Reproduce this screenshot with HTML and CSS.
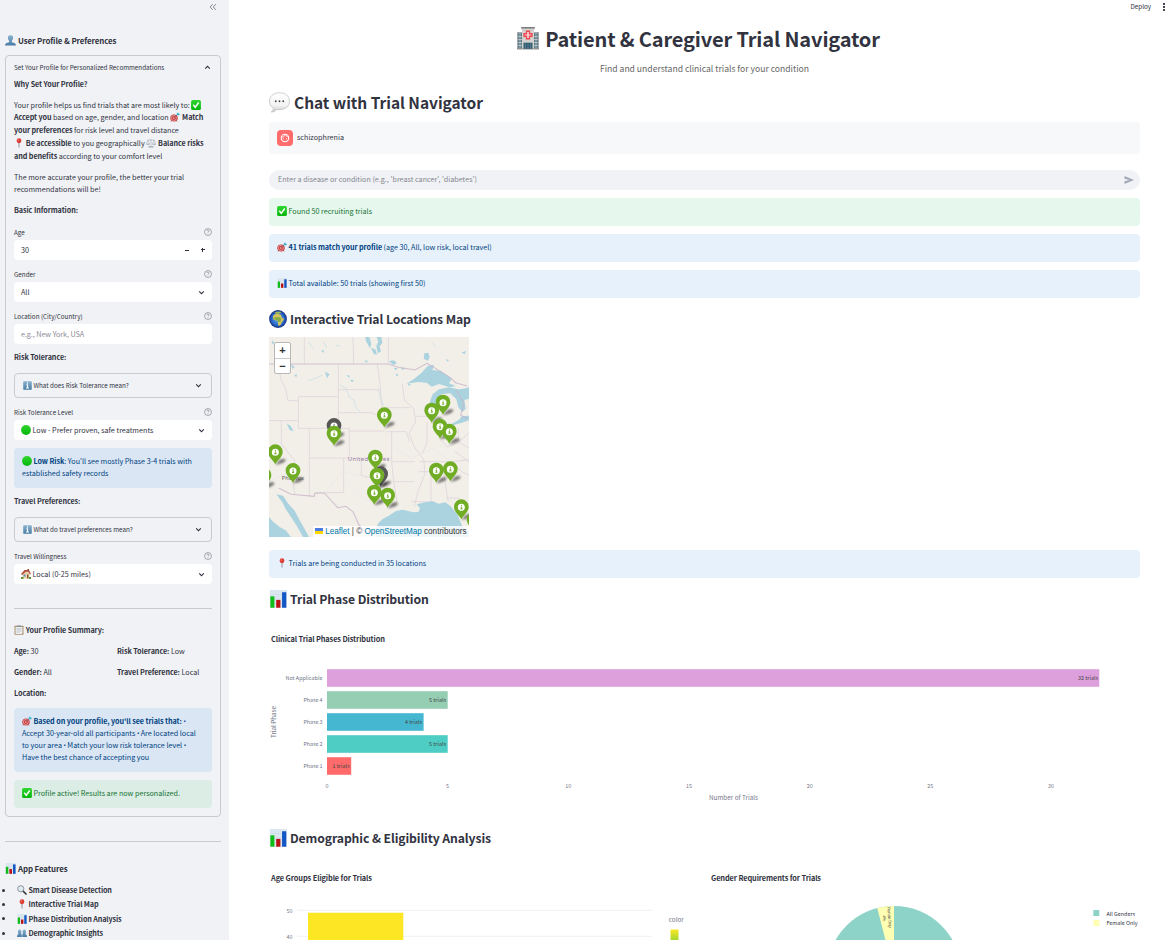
FILE: index.html
```html
<!DOCTYPE html>
<html lang="en">
<head>
<meta charset="utf-8">
<title>Patient &amp; Caregiver Trial Navigator</title>
<link rel="stylesheet" href="styles.css">
</head>
<body>
<svg class="sprite" aria-hidden="true">
  <defs>
    <linearGradient id="gGreen" x1="0" y1="0" x2="0" y2="1"><stop offset="0" stop-color="#2fd62f"/><stop offset="1" stop-color="#05b60c"/></linearGradient>
    <linearGradient id="gBlue" x1="0" y1="0" x2="0" y2="1"><stop offset="0" stop-color="#8db4d0"/><stop offset="1" stop-color="#467ba5"/></linearGradient>
    <linearGradient id="gBubble" x1="0" y1="0" x2="0" y2="1"><stop offset="0" stop-color="#fff"/><stop offset=".65" stop-color="#f4f4f4"/><stop offset="1" stop-color="#c9c9c9"/></linearGradient>
    <radialGradient id="gSea"><stop offset="0" stop-color="#5cb5ee"/><stop offset=".7" stop-color="#2b68c8"/><stop offset="1" stop-color="#142c7c"/></radialGradient>
  </defs>
  <symbol id="e-person" viewBox="0 0 20 20"><path d="M0 19c0-4 3-5 7-6 1-.4 1-2 0-3C5.600 8 5 6 5.200 4 5.500 1.500 7.500.5 10 .5s4.500 1 4.800 3.500c.2 2-.4 4-1.800 6-1 1-1 2.600 0 3 4 1 7 2 7 6z" fill="url(#gBlue)"/></symbol>
  <symbol id="e-people" viewBox="0 0 20 20"><path d="M0 18c0-4 1-5 3-6-1.500-2-2-8 2-9 4 0 4.500 5 3 9l2 1 2-1c-1.500-4-1-9 3-9 4 1 3.500 7 2 9 2 1 3 2 3 6z" fill="url(#gBlue)"/><path d="M10 13v5" stroke="#dce7ef"/></symbol>
  <symbol id="e-check" viewBox="0 0 20 20"><rect x=".2" y=".2" width="19.600" height="19.600" rx="3" fill="url(#gGreen)"/><path d="M4.500 9.500l4 5L15.500 5" fill="none" stroke="#fff" stroke-width="2.800"/></symbol>
  <symbol id="e-target" viewBox="0 0 20 20"><ellipse cx="8" cy="12" rx="7.500" ry="7.200" fill="#c93a3c"/><circle cx="7.700" cy="12" r="5.500" fill="#e9aaa6"/><circle cx="7.700" cy="12" r="4.200" fill="#c8393d"/><circle cx="7.700" cy="12" r="1.500" fill="#f6e2df"/><path d="M3 17l-1 2M13 17l1 2" stroke="#915045" stroke-width="1.500"/><path d="M8 11l7-6" stroke="#654d4d" stroke-width="1.200"/><path d="M13 6l1-4 3-1 0 2 3 1-2 3z" fill="#43b5cb"/></symbol>
  <symbol id="e-pin" viewBox="0 0 20 20"><path d="M10 9v10" stroke="#858991" stroke-width="1.800"/><circle cx="10" cy="5.500" r="4.800" fill="#dc3c34"/><circle cx="8.500" cy="4" r="1.400" fill="#f28a7e"/></symbol>
  <symbol id="e-scales" viewBox="0 0 20 20"><g fill="none" stroke="#a0aab3" stroke-width="1.100"><path d="M10 2v14M3 4h14M3.500 4L1 12h6L4 4M16.500 4L13 12h6L16 4M5 18h10"/></g><path d="M0 12h8l-2 2H2zM12 12h8l-2 2h-4zM5 16h10v3H5z" fill="#b0bac2"/></symbol>
  <symbol id="e-info" viewBox="0 0 20 20"><rect x=".5" y=".5" width="19" height="19" rx="2" fill="url(#gBlue)"/><path d="M10 3v3M7.500 8.500H10V15M6.500 15.500h7" stroke="#fff" stroke-width="2.400" fill="none"/></symbol>
  <symbol id="e-green" viewBox="0 0 20 20"><circle cx="10" cy="10" r="9.900" fill="url(#gGreen)"/></symbol>
  <symbol id="e-house" viewBox="0 0 20 20"><path d="M3 9l7-6 7 6v10H3z" fill="#e8d3ad"/><path d="M0 10L7 2l9 0 4 8-2 1-4-6-5 1-7 6z" fill="#b8503d"/><path d="M13 0h3v5h-3z" fill="#8f4738"/><path d="M5 11h4v4H5z" fill="#5f91b2"/><path d="M12 11h3v8h-3z" fill="#8a5633"/><path d="M0 16h5v4H0zM16 16h4v4h-4z" fill="#5c9a3d"/></symbol>
  <symbol id="e-clip" viewBox="0 0 20 20"><rect x="1" y="1.500" width="18" height="18" rx="1" fill="#a9906c"/><path d="M3 4h14v12l-2 2H3z" fill="#edf0f2"/><path d="M6 1h8v3H6z" fill="#8b9298"/><path d="M5 7h10M5 9.500h10M5 12h10M5 14.500h7" stroke="#a5adb5" stroke-width=".9"/></symbol>
  <symbol id="e-chart" viewBox="0 0 20 20"><path d="M1 0h19v20H1z" fill="#dce6ee"/><path d="M1 5h19M1 10h19M1 15h19" stroke="#c8d5df" stroke-width=".5"/><path d="M1.500 7H6v12.700H1.500z" fill="#10bd18"/><path d="M8 11h4.700v8.700H8z" fill="#be1219"/><path d="M14.500 2.500h4.700v17.200h-4.700z" fill="#1257c5"/></symbol>
  <symbol id="e-search" viewBox="0 0 20 20"><path d="M11 11l7 7" stroke="#33363a" stroke-width="3.400" stroke-linecap="round"/><circle cx="7.500" cy="7.500" r="6.200" fill="#dcebf2" stroke="#787f85" stroke-width="1.600"/></symbol>
  <symbol id="e-hospital" viewBox="0 0 44 46"><path d="M9 1h26v5H9z" fill="#77797c"/><path d="M0 11h12v34H0zM32 11h12v34H32z" fill="#a5a7a8"/><path d="M2 14h8v29H2zM34 14h8v29h-8z" fill="#587b89"/><path d="M6 14v29M38 14v29M2 20h8M2 26h8M2 32h8M2 38h8M34 20h8M34 26h8M34 32h8M34 38h8" stroke="#c5cbcd" stroke-width="1.500"/><path d="M10 4h24v41H10z" fill="#d4d2ce"/><path d="M9 2h26" stroke="#77797c" stroke-width="2"/><path d="M19 9.500h6v5h5v5h-5v5h-6v-5h-5v-5h5z" fill="#fbd9da" stroke="#ef4450" stroke-width="2.600"/><path d="M13 33h18v12H13z" fill="#315b71"/><path d="M13 32h18M22 34v11M17 34v11M27 34v11" stroke="#7597a7" stroke-width="1.200"/><path d="M0 45h44" stroke="#747679" stroke-width="1.500"/></symbol>
  <symbol id="e-bubble" viewBox="0 0 42 42"><path d="M21 1.500C9 1.500 1 8.500 1 18.500c0 6 3 11 8 14-.5 3-2 5.500-4.500 7.500 5 .3 8.500-2 11-5 13 2 25.500-4 25.500-16.500 0-10-8-17-20-17z" fill="url(#gBubble)" stroke="#bfbfbf" stroke-width="1.500"/><g fill="#4a4a4a"><circle cx="13.500" cy="18.500" r="1.900"/><circle cx="21" cy="18.500" r="1.900"/><circle cx="28.500" cy="18.500" r="1.900"/></g></symbol>
  <symbol id="e-globe" viewBox="0 0 36 36"><circle cx="18" cy="18" r="17.800" fill="url(#gSea)"/><path d="M8 12c2-3 4-4 8-4 3 0 6 0 8 2l2 6 4 1c0 4-4 6-5 9-1 4-4 7-6 5-2-3 0-7-2-10-4 0-8-1-9-4z" fill="#d3c35e"/><path d="M9 15c5-1 9-1 13 0 3 2 2 5 1 8-2 2-4 1-5-1-3-3-7-2-9-7z" fill="#86ab45"/><path d="M11 5l6-2 8 1-3 3-7 1z" fill="#a3b951"/></symbol>
  <symbol id="i-help" viewBox="0 0 24 24"><g fill="none" stroke="#85868e" stroke-width="2"><circle cx="12" cy="12" r="10.500"/><path d="M9 9a3 3 0 1 1 4.500 2.600C12.300 12.300 12 13 12 14M12 16.500v2"/></g></symbol>
  <symbol id="i-down" viewBox="0 0 12 12"><path d="M2 4l4 4 4-4" fill="none" stroke="#31333f" stroke-width="1.800"/></symbol>
  <symbol id="marker" viewBox="-24 -24 72 64" overflow="visible">
    <path d="M0 37L14 22c8-4 18-2 17 2S16 37 0 37z" fill="#000" opacity=".5" filter="url(#soft)"/>
    <path d="M0 36C-5 24-22 15-22-2A22 22 0 0 1 22-2C22 15 5 24 0 36z" fill="currentColor"/>
    <circle r="10.500" fill="#fff"/><path d="M-1-5h3M-2-.5H1V4M-3 4.500h6.500" stroke="currentColor" stroke-width="3" fill="none"/>
  </symbol>
</svg>

<div class="app">
<aside class="sidebar">
  <div class="collapse"><svg viewBox="0 0 14 14"><path d="M6.500 2L2 7l4.500 5M12 2L7.500 7l4.500 5" fill="none" stroke="#75767e" stroke-width="1.500"/></svg></div>
  <h4 class="side-title"><svg class="em em-h4"><use href="#e-person"/></svg>User Profile &amp; Preferences</h4>

  <section class="profile">
    <header class="profile-head"><span class="label-text">Set Your Profile for Personalized Recommendations</span><svg class="chev up"><use href="#i-down"/></svg></header>
    <p class="line"><b>Why Set Your Profile?</b></p>
    <p class="para">Your profile helps us find trials that are most likely to: <svg class="em tight"><use href="#e-check"/></svg><br><b>Accept you</b> based on age, gender, and location <svg class="em tight"><use href="#e-target"/></svg><b> Match</b><br><b>your preferences</b> for risk level and travel distance<br><svg class="em tight"><use href="#e-pin"/></svg><b> Be accessible</b> to you geographically <svg class="em tight"><use href="#e-scales"/></svg><b> Balance risks</b><br><b>and benefits</b> according to your comfort level</p>
    <p class="para">The more accurate your profile, the better your trial<br>recommendations will be!</p>
    <p class="para"><b>Basic Information:</b></p>

    <div class="field first"><div class="label">Age<svg class="help"><use href="#i-help"/></svg></div>
      <div class="input"><span>30</span><span class="steps"><i class="minus"></i><i class="plus"></i></span></div></div>
    <div class="field"><div class="label">Gender<svg class="help"><use href="#i-help"/></svg></div>
      <div class="input"><span>All</span><svg class="chev"><use href="#i-down"/></svg></div></div>
    <div class="field"><div class="label">Location (City/Country)<svg class="help"><use href="#i-help"/></svg></div>
      <div class="input hint"><span>e.g., New York, USA</span></div></div>

    <p class="line group"><b>Risk Tolerance:</b></p>
    <div class="expander"><span><svg class="em"><use href="#e-info"/></svg>What does Risk Tolerance mean?</span><svg class="chev"><use href="#i-down"/></svg></div>
    <div class="field"><div class="label">Risk Tolerance Level<svg class="help"><use href="#i-help"/></svg></div>
      <div class="input"><span><svg class="em"><use href="#e-green"/></svg>Low - Prefer proven, safe treatments</span><svg class="chev"><use href="#i-down"/></svg></div></div>
    <div class="alert info"><svg class="em"><use href="#e-green"/></svg><b>Low Risk</b>: You'll see mostly Phase 3-4 trials with<br>established safety records</div>

    <p class="line group"><b>Travel Preferences:</b></p>
    <div class="expander"><span><svg class="em"><use href="#e-info"/></svg>What do travel preferences mean?</span><svg class="chev"><use href="#i-down"/></svg></div>
    <div class="field"><div class="label">Travel Willingness<svg class="help"><use href="#i-help"/></svg></div>
      <div class="input"><span><svg class="em"><use href="#e-house"/></svg>Local (0-25 miles)</span><svg class="chev"><use href="#i-down"/></svg></div></div>

    <hr>
    <p class="line"><svg class="em tight"><use href="#e-clip"/></svg><b> Your Profile Summary:</b></p>
    <div class="summary">
      <p><b>Age:</b> 30</p><p><b>Risk Tolerance:</b> Low</p>
      <p><b>Gender:</b> All</p><p><b>Travel Preference:</b> Local</p>
      <p><b>Location:</b></p>
    </div>
    <div class="alert info"><svg class="em"><use href="#e-target"/></svg><b>Based on your profile, you'll see trials that:</b> <span class="dot">•</span><br>Accept 30-year-old all participants <span class="dot">•</span> Are located local<br>to your area <span class="dot">•</span> Match your low risk tolerance level <span class="dot">•</span><br>Have the best chance of accepting you</div>
    <div class="alert success"><svg class="em"><use href="#e-check"/></svg>Profile active! Results are now personalized.</div>
  </section>

  <hr class="side-rule">
  <h4 class="side-title features-title"><svg class="em em-h4"><use href="#e-chart"/></svg>App Features</h4>
  <ul class="features">
    <li><svg class="em"><use href="#e-search"/></svg>Smart Disease Detection</li>
    <li><svg class="em"><use href="#e-pin"/></svg>Interactive Trial Map</li>
    <li><svg class="em"><use href="#e-chart"/></svg>Phase Distribution Analysis</li>
    <li><svg class="em"><use href="#e-people"/></svg>Demographic Insights</li>
  </ul>
</aside>

<main class="main">
  <nav class="toolbar"><span>Deploy</span><svg viewBox="0 0 4 10"><path d="M1 1h2v2H1zM1 4h2v2H1zM1 7h2v2H1z" fill="#454751"/></svg></nav>
  <div class="content">
    <h1><svg class="em-h1"><use href="#e-hospital"/></svg><span>Patient &amp; Caregiver Trial Navigator</span></h1>
    <p class="subtitle">Find and understand clinical trials for your condition</p>
    <h2><svg class="em-h2"><use href="#e-bubble"/></svg><span>Chat with Trial Navigator</span></h2>

    <div class="message"><span class="avatar"><svg viewBox="0 0 16 16"><circle cx="8" cy="8" r="3.700" fill="none" stroke="#fff" stroke-width="1.100"/><path d="M4.500 7c1.800 0 3.200-.7 3.700-2.200.8 1.200 1.800 1.900 3.600 1.900" fill="none" stroke="#fff" stroke-width=".8"/><circle cx="6.500" cy="8.700" r=".55" fill="#fff"/><circle cx="9.500" cy="8.700" r=".55" fill="#fff"/></svg></span><span class="message-text">schizophrenia</span></div>
    <div class="chat-input"><span>Enter a disease or condition (e.g., 'breast cancer', 'diabetes')</span><svg viewBox="0 0 10 8"><path d="M.5 0L10 4 .5 8V5.200L5.500 4 .5 2.800z" fill="#a3a8b8"/></svg></div>
    <div class="alert success"><svg class="em"><use href="#e-check"/></svg>Found 50 recruiting trials</div>
    <div class="alert info"><svg class="em"><use href="#e-target"/></svg><b>41 trials match your profile</b> (age 30, All, low risk, local travel)</div>
    <div class="alert info"><svg class="em"><use href="#e-chart"/></svg>Total available: 50 trials (showing first 50)</div>

    <h3 class="map-title"><svg class="em-h3"><use href="#e-globe"/></svg><span>Interactive Trial Locations Map</span></h3>
    <div class="map">
      <svg class="tiles" viewBox="12 96 600 600">
        <defs><filter id="soft" x="-30%" y="-30%" width="160%" height="160%"><feGaussianBlur stdDeviation="2.500"/></filter></defs>
        <rect x="12" y="96" width="600" height="600" fill="#f2efe9"/>
        <g fill="#aad3df">
          <path d="M424 236l20-12 25-20 20-22 18-2-5 15 25 3 18 13 15 10-8 14 20 8-18 4-32-10-22 8-15-12-25-2z"/>
          <path d="M494 345c-6-30 0-62 10-78l18-14 30-6 28 6 16-2 16-4v34l-14 4 4 26-10 10-12-14-6-24-18-18-26 2-12 24-4 38-8 16z"/>
          <path d="M558 358l24-14 8-10 22-2v14l-24 8-22 6z"/>
          <path d="M335 696c-8-30 6-50 34-62l24-16 20-4 32 8 16-2 4-10-10-12 24-6 22-4 20 8 20-4 16 12 20 24 14 34 21 22v12z"/>
          <path d="M12 636l10 12 22 18 18 10 16 20H12zM34 568l20 4 16 24 18 20 22 40 22 40h-18l-18-32-18-28-16-24-10-20z"/>
          <path d="M301 96h12l6 20-4 14-12-22zM335 96h14l3 18-8 10 4 16-10 4-4-22 6-12zM318 128l14 6 4 16-10-4zM478 145l12-2 4 14-6 10-12-6zM372 168l14-2 10 8-12 6zM65 355l12 8 9 16-12-4zM77 178l12 8-6 6z"/>
          <path d="M22 106l6 8-8 4zM169 138l8-4-2 10zM180 200l14 8-8 12zM88 210l8-2-2 10zM245 210l10 2-4 6zM255 224l12 2-6 6zM386 188l12 2-6 6zM410 186l10 6-10 2zM430 235l8 4-8 4zM544 162l8 4-6 4zM590 142l14-4-6 10zM393 205l8 6-8 2zM300 165l10 4-8 4z"/>
        </g>
        <g fill="none" stroke="#c3dde4" stroke-width="2"><path d="M225 240l18 10 10 26 14 10 5 20 12 14M130 226l22-6 20-10M340 250l6 30 10 22M130 110l14 20M175 110l10 18M500 110l12 16M212 120l12 4"/></g>
        <g fill="none" stroke="#ddd1d8" stroke-width="2.200">
          <path d="M118 96v80M264 96l2 80M370 96v80M40 178l8 46 14 26 6 36 32 2M100 275h120M220 178v192M100 275v95h153v88M133 370v206M220 254h122M220 323h98l24 10 14 20M337 178l8 60 5 60 8 40M133 459h247M12 347h88M49 347v70l40 50-8 30 8 70M236 459v103l-88 2M289 459v52l40 10 34 8M253 378h106M380 380v90l6 60 10 60M356 308h80M364 380l60 0 10 30M380 470h70M412 236l6 50 28 24 6 40-20 36 16 40 28 36 4 44-22 56-10 44M452 334h48M486 350v62l-14 34M524 350l4 56 20 20 30-12 34-30M464 470h100l48-6M460 500h100M498 500v90M536 500l10 70 4 20M545 578l40 2M386 530h60M440 590h46M580 370v40l32 20M560 470l30 30 22 12M570 440l42 30"/>
        </g>
        <path d="M12 177h358l30 10 50 8 36-20 66 40 20 18 34 10M42 550l36 18 70 6 2-10h28l40 44 24-4 22 16 16 36 18 24M573 255l24 40-10 36 20 10" fill="none" stroke="#c9b4c9" stroke-width="3.200" opacity=".8"/>
        <g fill="none" stroke="#e9e1e2" stroke-width="1.500"><path d="M12 530l60-30 60 60M60 500l40 80M170 580l60-80 90 20M390 430l50 30 60-30 60 40M270 560l60 40 50-40"/></g>
        <g class="place"><text x="248" y="468">United States</text><text x="50" y="525" class="city">Phoenix</text></g>
        <g class="pins">
          <use href="#marker" x="-24" y="-24" width="72" height="64" transform="translate(534 293)"/>
          <use href="#marker" x="-24" y="-24" width="72" height="64" transform="translate(500 317)"/>
          <use href="#marker" x="-24" y="-24" width="72" height="64" transform="translate(358 331)"/>
          <use href="#marker" class="dark" x="-24" y="-24" width="72" height="64" transform="translate(207 363)"/>
          <use href="#marker" x="-24" y="-24" width="72" height="64" transform="translate(207 386)"/>
          <use href="#marker" x="-24" y="-24" width="72" height="64" transform="translate(525 365)"/>
          <use href="#marker" x="-24" y="-24" width="72" height="64" transform="translate(553 380)"/>
          <use href="#marker" x="-24" y="-24" width="72" height="64" transform="translate(31 442)"/>
          <use href="#marker" x="-24" y="-24" width="72" height="64" transform="translate(331 458)"/>
          <use href="#marker" x="-24" y="-24" width="72" height="64" transform="translate(556 493)"/>
          <use href="#marker" x="-24" y="-24" width="72" height="64" transform="translate(514 497)"/>
          <use href="#marker" x="-24" y="-24" width="72" height="64" transform="translate(84 498)"/>
          <use href="#marker" class="dark" x="-24" y="-24" width="72" height="64" transform="translate(347 508)"/>
          <use href="#marker" x="-24" y="-24" width="72" height="64" transform="translate(336 512)"/>
          <use href="#marker" x="-24" y="-24" width="72" height="64" transform="translate(-3 512)"/>
          <use href="#marker" x="-24" y="-24" width="72" height="64" transform="translate(328 563)"/>
          <use href="#marker" x="-24" y="-24" width="72" height="64" transform="translate(368 572)"/>
          <use href="#marker" x="-24" y="-24" width="72" height="64" transform="translate(589 607)"/>
          <use href="#marker" x="-24" y="-24" width="72" height="64" transform="translate(627 645)"/>
        </g>
      </svg>
      <div class="zoom"><span>+</span><span>−</span></div>
      <div class="credit"><svg viewBox="0 0 8 6"><path d="M0 0h8v3H0z" fill="#4c7be1"/><path d="M0 3h8v3H0z" fill="#ffd500"/></svg><a>Leaflet</a> | © <a>OpenStreetMap</a> contributors</div>
    </div>
    <div class="alert info located"><svg class="em"><use href="#e-pin"/></svg>Trials are being conducted in 35 locations</div>

    <h3 class="phase-title"><svg class="em-h3"><use href="#e-chart"/></svg><span>Trial Phase Distribution</span></h3>
    <svg class="phase-chart" viewBox="269 620 871 200">
      <text class="chart-title" x="271" y="642" textLength="114">Clinical Trial Phases Distribution</text>
      <g>
        <rect x="327" y="669.200" width="772.300" height="17.600" fill="#dda0dd"/>
        <rect x="327" y="691.200" width="120.700" height="17.600" fill="#96ceb4"/>
        <rect x="327" y="713.200" width="96.600" height="17.600" fill="#45b7d1"/>
        <rect x="327" y="735.200" width="120.700" height="17.600" fill="#4ecdc4"/>
        <rect x="327" y="757.200" width="24.200" height="17.600" fill="#ff6b6b"/>
      </g>
      <g class="value"><text x="1098" y="680" textLength="20">32 trials</text><text x="446" y="702" textLength="17">5 trials</text><text x="422" y="724" textLength="17">4 trials</text><text x="446" y="746" textLength="17">5 trials</text><text x="349.500" y="768" textLength="17">1 trials</text></g>
      <g class="tick end"><text x="322.500" y="680" textLength="37">Not Applicable</text><text x="322.500" y="702" textLength="19">Phase 4</text><text x="322.500" y="724" textLength="19">Phase 3</text><text x="322.500" y="746" textLength="19">Phase 2</text><text x="322.500" y="768" textLength="19">Phase 1</text></g>
      <g class="tick mid"><text x="327" y="788">0</text><text x="447.600" y="788">5</text><text x="568.300" y="788">10</text><text x="689" y="788">15</text><text x="809.700" y="788">20</text><text x="930.300" y="788">25</text><text x="1051" y="788">30</text></g>
      <text class="axis" x="733.500" y="800" textLength="49">Number of Trials</text>
      <text class="axis" transform="translate(276 722) rotate(-90)" textLength="32">Trial Phase</text>
    </svg>

    <h3 class="demo-title"><svg class="em-h3"><use href="#e-chart"/></svg><span>Demographic &amp; Eligibility Analysis</span></h3>
    <div class="columns">
      <svg viewBox="269 860 431 80">
        <defs><linearGradient id="viridis" x1="0" y1="0" x2="0" y2="1"><stop offset="0" stop-color="#fde725"/><stop offset="1" stop-color="#a5d82e"/></linearGradient></defs>
        <text class="chart-title" x="271" y="881" textLength="101">Age Groups Eligible for Trials</text>
        <path d="M297 910.300h355M297 936.300h355" stroke="#eef0f4"/>
        <path d="M308 912.700h95.300V940H308z" fill="#fde725"/>
        <g class="tick end"><text x="292.500" y="912.500">50</text><text x="292.500" y="938.500">40</text></g>
        <text class="axis" x="676.300" y="922" textLength="15">color</text>
        <path d="M670.500 929.500h8V940h-8z" fill="url(#viridis)"/>
      </svg>
      <svg viewBox="709 860 431 80">
        <text class="chart-title" x="711" y="881" textLength="110">Gender Requirements for Trials</text>
        <circle cx="894" cy="973.300" r="67.300" fill="#8dd3c7"/>
        <path d="M894 973.300L877.300 908.100A67.300 67.300 0 0 1 894 906z" fill="#ffffb3"/>
        <g class="slice"><text transform="translate(887.300 907) rotate(86)" textLength="21">Female Only</text><text transform="translate(882.500 915.500) rotate(82)" textLength="6">4%</text></g>
        <path d="M1093.300 910h6v6h-6z" fill="#8dd3c7"/><path d="M1093.300 920h6v6h-6z" fill="#ffffb3"/>
        <g class="legend"><text x="1106.500" y="915.800" textLength="28.500">All Genders</text><text x="1106.500" y="925.300" textLength="31">Female Only</text></g>
      </svg>
    </div>
  </div>
</main>
</div>
</body>
</html>
```
FILE: styles.css
```css
* { box-sizing: border-box; }
body, h1, h2, h3, h4, p, ul, hr { margin: 0; padding: 0; }
body {
  font-family: "Noto Sans CJK SC", "Noto Sans", sans-serif;
  font-size: 7.2px;
  color: #31333f;
  background: #fff;
  white-space: nowrap;
}
b { letter-spacing: -.07px; }
svg { display: block; overflow: hidden; flex: none; }
.sprite { position: absolute; width: 0; height: 0; }
.app { display: flex; height: 940px; overflow: hidden; }

/* emoji-like pictures set inside text */
.em { display: inline-block; width: 10px; height: 10px; vertical-align: -2px; margin-right: 1.5px; }
.em.tight { margin-right: .3px; }
.em-h4 { width: 11px; height: 11px; margin-right: 2px; }
.em-h1 { width: 22px; height: 24px; margin-right: 6px; }
.em-h2 { width: 21px; height: 21px; margin-right: 4px; }
.em-h3 { width: 18px; height: 18px; margin-right: 3px; }
.dot { font-family: "Open Sans", sans-serif; font-size: 6.500px; line-height: 1; letter-spacing: -.3px; }

/* sidebar */
.sidebar { width: 229px; flex: none; background: #f0f2f6; padding: 0 8px 0 5px; overflow: hidden; }
.collapse { height: 34px; display: flex; justify-content: flex-end; padding: 3px 4px 0 0; }
.collapse svg { width: 8px; height: 8px; }
.side-title { height: 14px; line-height: 14px; font-size: 7.9px; font-weight: 700; letter-spacing: -.1px; }
.profile { margin-top: 7px; height: 762px; border: 1px solid #c8cad0; border-radius: 4px; padding: 0 8px; }
.profile-head { height: 22px; display: flex; align-items: center; justify-content: space-between; font-size: 6.3px; }
.chev { width: 7px; height: 7px; margin-right: 4px; }
.profile-head .chev { margin-right: 1px; }
.up { transform: rotate(180deg); }
.line { height: 13px; line-height: 13px; }
.para { line-height: 12.8px; margin-top: 8px; letter-spacing: -.02px; }
.profile .line + .para { margin-top: 7.700px; }
.field { margin-top: 8px; }
.field.first { margin-top: 9px; }
.label { height: 12px; margin-bottom: 2px; display: flex; align-items: center; justify-content: space-between; font-size: 6.3px; }
.help { width: 8px; height: 8px; }
.input { height: 20px; background: #fff; border-radius: 4px; display: flex; align-items: center; justify-content: space-between; padding: 0 4px 0 7px; }
.input .chev { margin-right: 3.500px; }
.hint { color: #8c8d95; }
.hint span { letter-spacing: -.06px; }
.steps { display: flex; gap: 12px; align-items: center; padding-right: 3px; }
.minus, .plus { width: 4px; height: 4px; background: linear-gradient(#31333f, #31333f) center / 4px 1px no-repeat; }
.plus { background: linear-gradient(#31333f, #31333f) center / 4px 1.300px no-repeat, linear-gradient(#31333f, #31333f) center / 1.300px 4px no-repeat; }
.group { margin-top: 7px; }
.expander { margin-top: 9px; height: 25px; border: 1px solid #c8cad0; border-radius: 4px; display: flex; align-items: center; justify-content: space-between; padding: 0 5.500px 0 8px; font-size: 6.300px; }
.expander .em { width: 9px; height: 9px; }
.alert { border-radius: 4px; padding: 7px 8px 9px; line-height: 12px; margin-top: 8px; letter-spacing: -.01px; }
.info { background: #e7f1fb; color: #004280; }
.success { background: #e6f8ed; color: #177233; }
.sidebar .info { background: #dae6f4; }
.sidebar .success { background: #dbede4; }
hr { border: 0; height: 1px; background: #c9cbd1; }
.profile hr { margin: 24px 0 15px; }
.summary { display: grid; grid-template-columns: 103px 1fr; grid-auto-rows: 13px; row-gap: 8px; line-height: 13px; margin-top: 8px; }
.side-rule { margin: 24px 0 20px; width: 216px; }
.features { list-style: none; padding-top: 7px; font-weight: 700; letter-spacing: -.13px; }
.features li { height: 14.300px; line-height: 14.300px; display: flex; align-items: center; }
.features li::before { content: ""; width: 3px; height: 3px; border-radius: 50%; background: #31333f; margin: 0 12px 0 -3px; }

/* main column */
.main { flex: 1; min-width: 0; overflow: hidden; }
.toolbar { height: 12px; display: flex; justify-content: flex-end; align-items: center; gap: 11px; padding-right: 5px; font-size: 6.300px; }
.toolbar svg { width: 4px; height: 10px; margin-top: 1px; }
.content { padding: 0 31px 0 40px; }
h1, h2, h3 { display: flex; align-items: center; font-weight: 700; }
h1 { height: 30px; margin-top: 11px; justify-content: center; font-size: 20px; letter-spacing: -.15px; padding-right: 12px; }
h2 { height: 22px; margin-top: 16px; font-size: 15.500px; letter-spacing: -.04px; }
h3 { height: 20px; font-size: 12.200px; letter-spacing: -.1px; }
h3 span { margin-top: -1px; }
.subtitle { height: 14px; line-height: 14px; margin-top: 8px; text-align: center; font-size: 8.600px; color: #666; }
.message { height: 32px; margin-top: 9px; background: #f7f8fa; border-radius: 4px; display: flex; align-items: center; gap: 4px; padding: 0 8px; }
.message-text { margin-top: -2px; }
.avatar { width: 16px; height: 16px; border-radius: 4px; background: #ff6c6c; }
.chat-input { height: 20px; margin-top: 16px; background: #f0f2f6; border-radius: 10px; display: flex; align-items: center; justify-content: space-between; padding: 0 6px 0 9px; color: #85868e; }
.chat-input span { margin-top: -2px; }
.chat-input svg { width: 10px; height: 8px; }
.map-title { margin-top: 11px; }
.map { position: relative; width: 200px; height: 200px; margin-top: 8px; overflow: hidden; }
.tiles { width: 200px; height: 200px; }
.place { font-size: 18px; fill: #9b7fa5; font-family: "Noto Sans", sans-serif; letter-spacing: 1px; }
.place .city { font-size: 16px; fill: #555; }
.pins { color: #70ad25; }
.dark { color: #575757; }
.zoom { position: absolute; left: 5px; top: 5px; width: 17px; border: 1px solid #b9b7b3; border-radius: 2px; background: #fff; }
.zoom span { display: block; height: 15px; text-align: center; font: bold 11px/15px "Liberation Sans", sans-serif; color: #333; }
.zoom span + span { border-top: 1px solid #ccc; }
.credit { position: absolute; right: 0; bottom: 0; height: 11px; background: rgba(255, 255, 255, .8); padding: 0 2.500px; font: 8.150px/11px "Liberation Sans", sans-serif; color: #333; }
.credit svg { display: inline-block; width: 8px; height: 6px; margin-right: 2px; }
.credit a { color: #0078a8; }
.located { margin-top: 13px; }
.phase-title { margin-top: 11px; }
.phase-chart { width: 871px; height: 200px; margin-top: 11px; }
.demo-title { margin-top: 8px; }
.columns { display: grid; grid-template-columns: 431px 431px; gap: 9px; margin-top: 12px; }
.columns svg { width: 431px; height: 80px; }

/* chart text */
.chart-title { font-size: 7.400px; font-weight: 700; fill: #31333f; }
.value { font-size: 5.400px; fill: #444; text-anchor: end; }
.tick { font-size: 5.400px; fill: #737788; }
.end { text-anchor: end; }
.mid, .axis { text-anchor: middle; }
.axis { font-size: 6.300px; fill: #737788; }
.slice { font-size: 4px; fill: #444; }
.legend { font-size: 5.400px; fill: #31333f; }
```
